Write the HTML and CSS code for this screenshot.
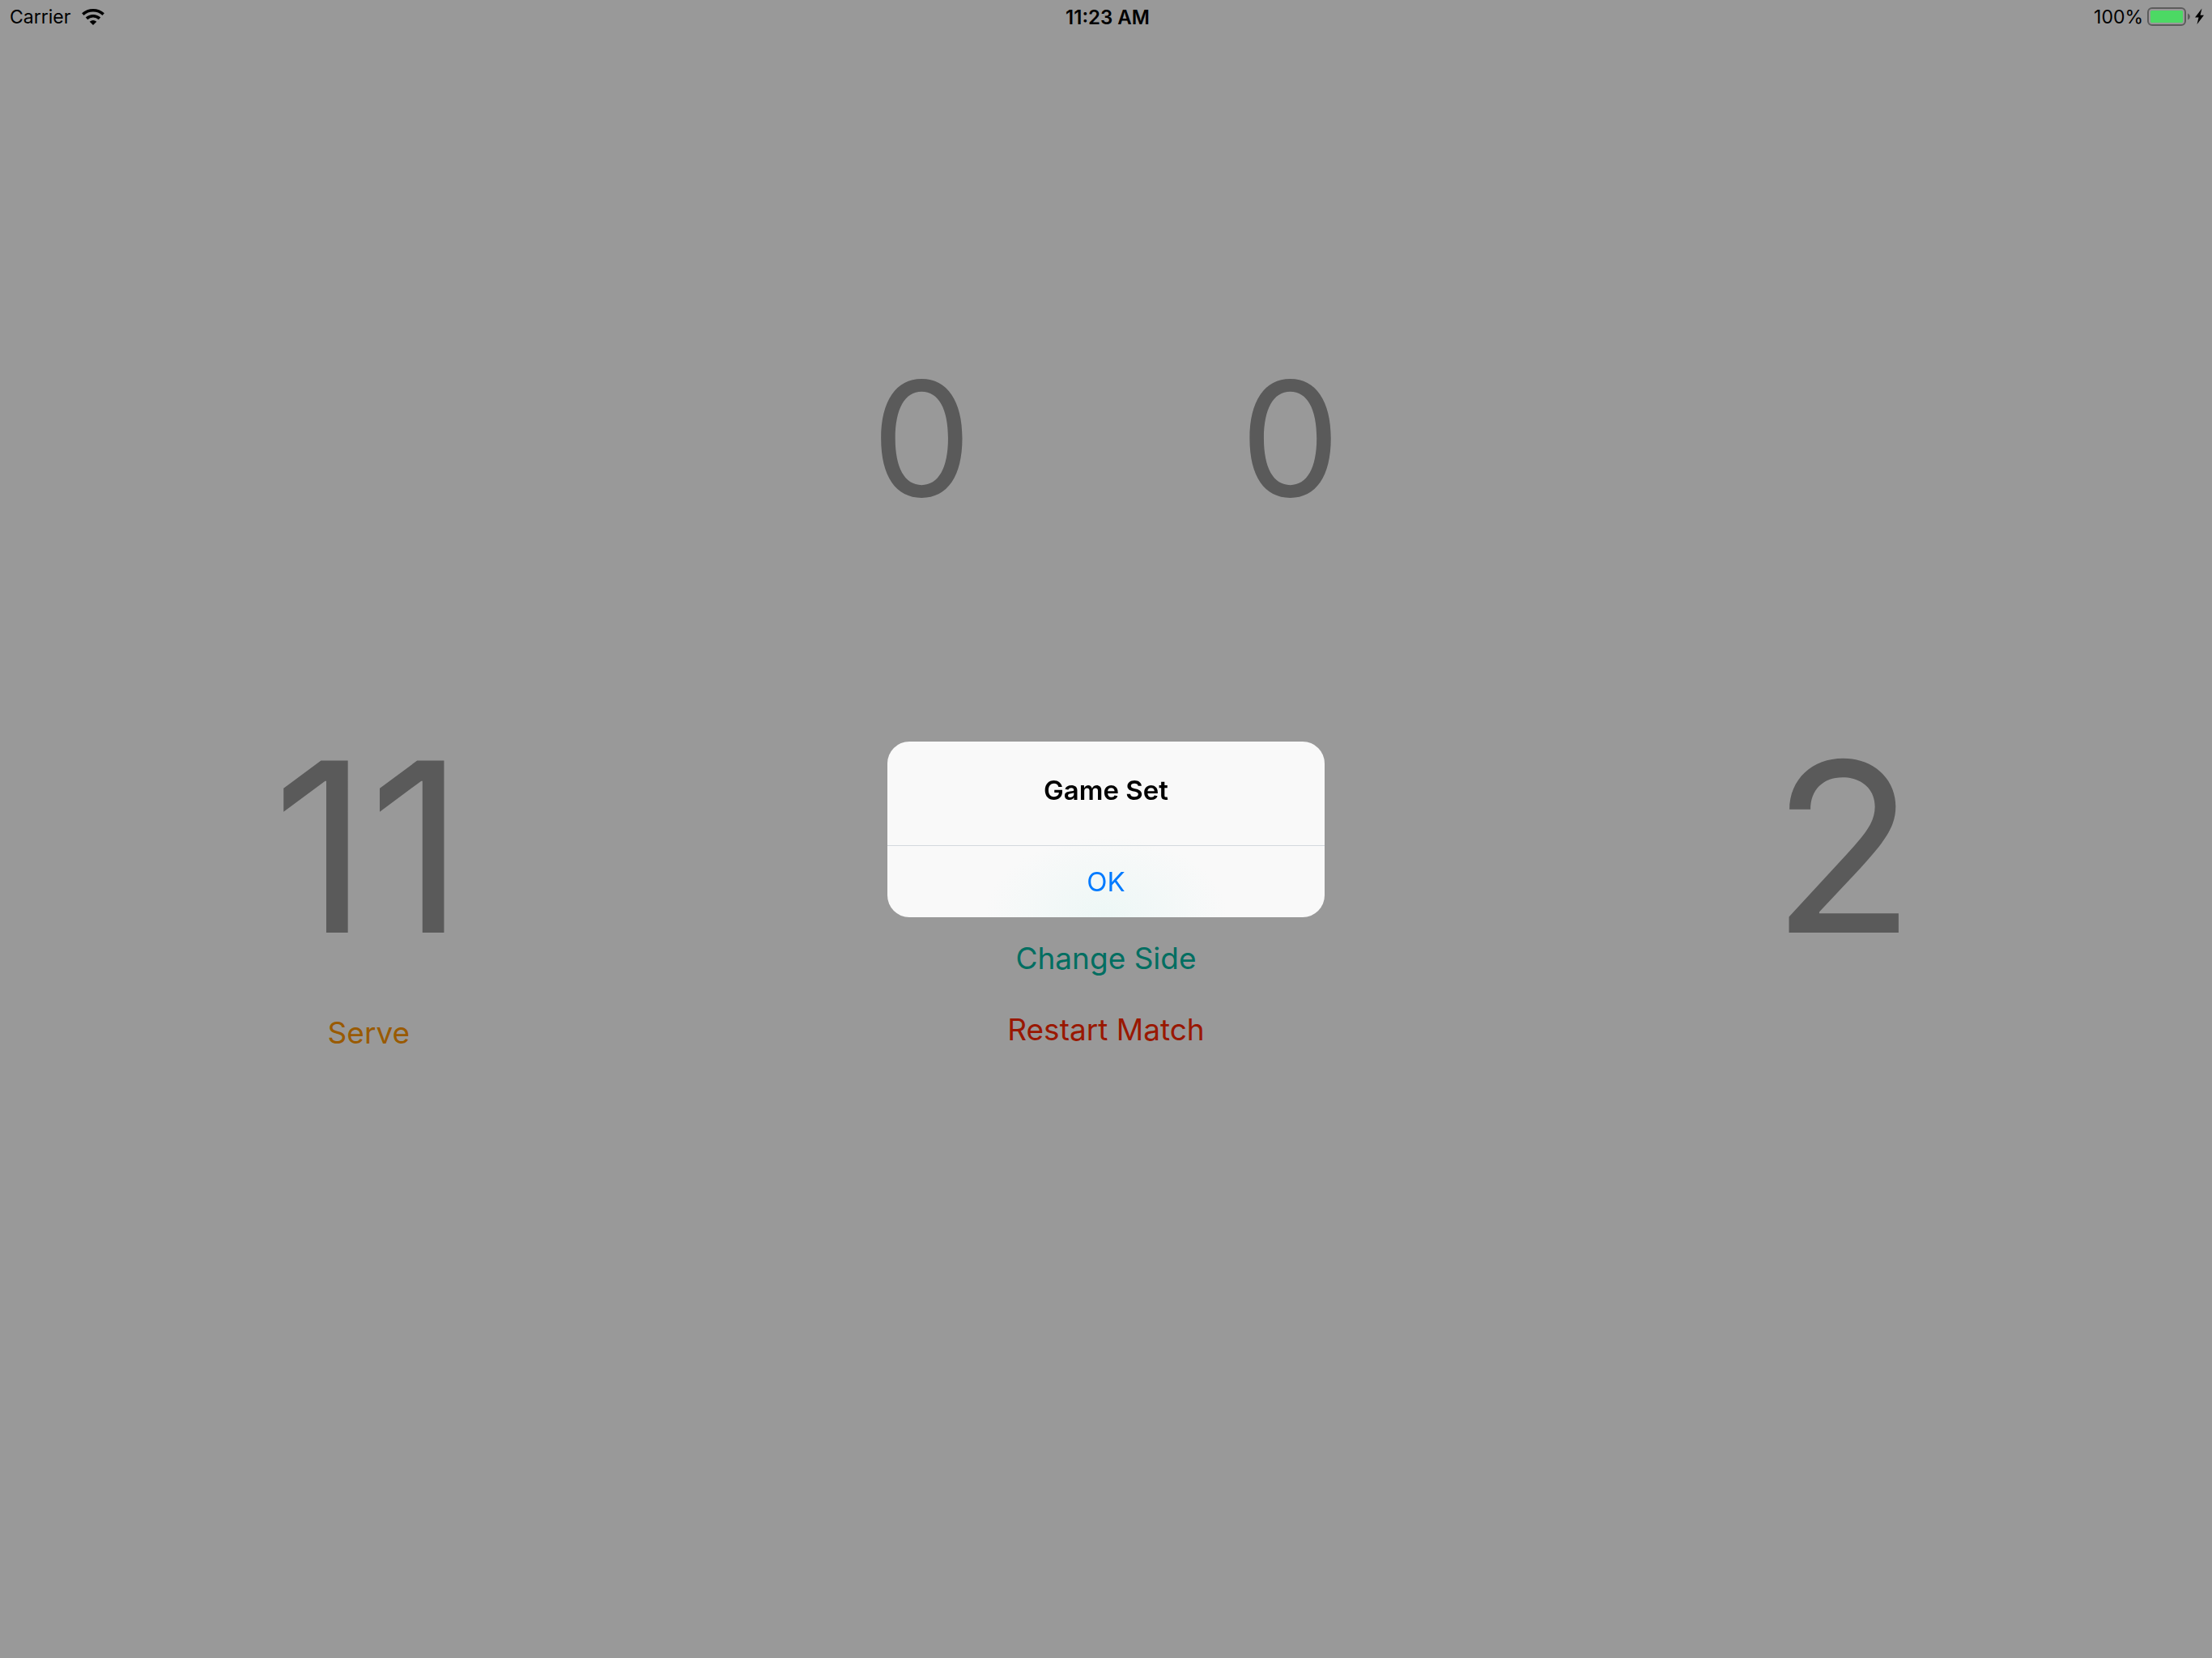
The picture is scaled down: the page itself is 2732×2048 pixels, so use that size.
FILE: index.html
```
<!DOCTYPE html>
<html lang="en">
<head>
<meta charset="utf-8">
<meta name="viewport" content="width=device-width, initial-scale=1">
<title>Scoreboard</title>
<link rel="stylesheet" href="styles.css">
</head>
<body>
<header class="status">
  <div class="status-left">
    <span>Carrier</span>
    <svg class="wifi" viewBox="0 0 28 20" aria-hidden="true">
      <g fill="none" stroke="#000" stroke-width="3.6">
        <path d="M1.3 6.7Q6.8 1.8 14 1.8T26.7 6.7"/>
        <path d="M6 11.9Q9.4 8.8 14 8.8T22 11.9"/>
      </g>
      <path d="M9.7 15.7Q14 12.2 18.3 15.7L14 20Z"/>
    </svg>
  </div>
  <time class="clock">11:23 AM</time>
  <div class="status-right">
    <span>100%</span>
    <svg class="battery" viewBox="0 0 72 24" aria-hidden="true">
      <rect x="1" y="1" width="46" height="21" rx="5" fill="none" stroke="#5c5c5c" stroke-width="2"/>
      <rect x="4" y="4" width="40" height="15" rx="1.5" fill="#4cd964"/>
      <path d="M50 7.5Q53 9 53 11.500T50 15.500Z" fill="#5c5c5c"/>
      <path d="M67.500 1.500L59 12.500H63.500L61.500 21L70 9.800H65.500Z"/>
    </svg>
  </div>
</header>

<main class="board">
  <section class="games">
    <p class="game-count">0</p>
    <p class="game-count">0</p>
  </section>
  <section class="match">
    <div class="player">
      <p class="points">11</p>
      <button class="action serve" type="button">Serve</button>
    </div>
    <div class="actions">
      <button class="action change" type="button">Change Side</button>
      <button class="action restart" type="button">Restart Match</button>
    </div>
    <div class="player">
      <p class="points">2</p>
    </div>
  </section>
</main>

<div class="overlay">
  <div class="alert" role="alertdialog" aria-labelledby="alert-title">
    <h1 class="alert-title" id="alert-title">Game Set</h1>
    <button class="alert-ok" type="button">OK</button>
  </div>
</div>
</body>
</html>
```
FILE: styles.css
```
* {
  box-sizing: border-box;
}

body {
  margin: 0;
  min-height: 100vh;
  background: #999;
  color: #000;
  font-family: Inter, "Liberation Sans", sans-serif;
}

button {
  margin: 0;
  padding: 0;
  border: 0;
  background: none;
  font: inherit;
}

h1,
p {
  margin: 0;
}

.status {
  display: grid;
  grid-template-columns: 1fr auto 1fr;
  align-items: center;
  height: 42px;
  padding: 0 8px 0 12px;
  font-size: 23px;
}

.status-left,
.status-right {
  display: flex;
  align-items: center;
}

.status-left {
  gap: 14px;
}

.status-right {
  justify-content: flex-end;
  gap: 5px;
}

.clock {
  font-size: 24px;
  font-weight: 600;
  font-kerning: none;
}

.wifi {
  width: 28px;
  height: 20px;
}

.battery {
  width: 72px;
  height: 24px;
}

.board {
  padding-top: 380px;
}

.games {
  display: grid;
  grid-template-columns: 1fr 1fr;
  width: 33.333%;
  margin: 0 auto 208px;
}

.game-count {
  color: #5a5a5a;
  font-size: 196px;
  line-height: 240px;
  text-align: center;
}

.match {
  display: grid;
  grid-template-columns: repeat(3, 1fr);
}

.player,
.actions {
  display: flex;
  flex-direction: column;
  align-items: center;
}

.player {
  gap: 30px;
}

.points {
  color: #5a5a5a;
  font-size: 292px;
  font-kerning: none;
  line-height: 352px;
}

.actions {
  gap: 40px;
  padding-top: 290px;
}

.action {
  font-size: 37px;
  line-height: 48px;
}

.serve {
  color: #995a00;
}

.change {
  color: #006e61;
}

.restart {
  color: #991700;
}

.overlay {
  position: fixed;
  inset: 0;
  display: grid;
  place-items: center;
}

.alert {
  width: 540px;
  overflow: hidden;
  border-radius: 27px;
  background: radial-gradient(ellipse 150px 100px at 50% 100%, #edf7f6, #f9f9f9) #f9f9f9;
  text-align: center;
}

.alert-title {
  padding: 40px 32px 48px;
  font-size: 33px;
  font-weight: 600;
  line-height: 40px;
}

.alert-ok {
  display: block;
  width: 100%;
  border-top: 1px solid #d3d9dd;
  color: #007aff;
  font-size: 33px;
  line-height: 88px;
}
```
